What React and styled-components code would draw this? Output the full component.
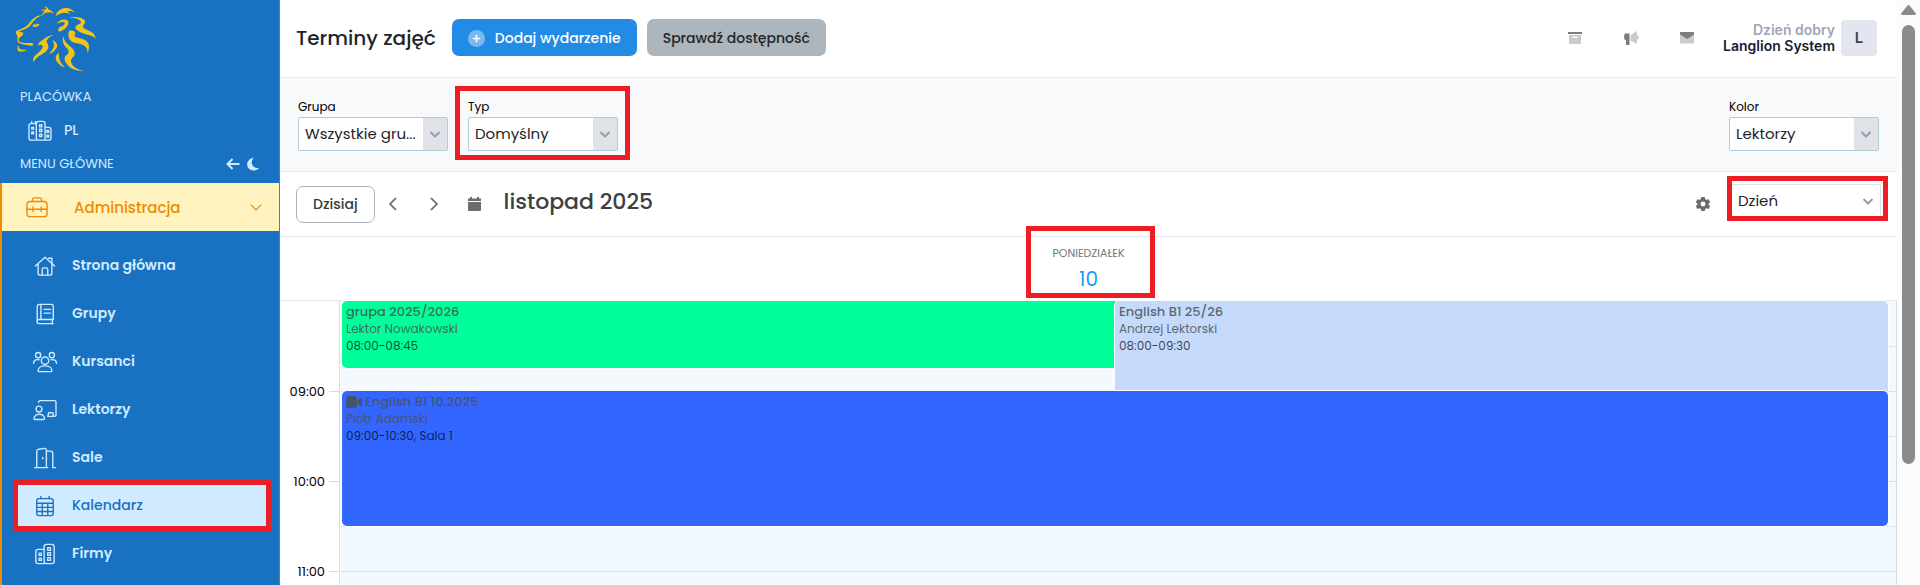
import { useState } from 'react';
import styled, { createGlobalStyle, css } from 'styled-components';

const GlobalStyle = createGlobalStyle`
  * {
    box-sizing: border-box;
  }

  body {
    margin: 0;
    overflow: hidden;
    background: #fff;
    color: #212529;
    font-family: Poppins, Inter, sans-serif;
    font-size: 14px;
  }

  button, select {
    font-family: inherit;
  }
`;

const marked = css`
  position: relative;

  &::after {
    content: '';
    position: absolute;
    inset: ${(props) => props.$inset};
    border: 5px solid #ee1c25;
    pointer-events: none;
  }
`;

const Page = styled.div`
  display: grid;
  grid-template-columns: 280px minmax(0, 1fr) 23px;
  height: 100vh;
  overflow: hidden;
`;

/* ---------- sidebar ---------- */

const Sidebar = styled.aside`
  display: flex;
  flex-direction: column;
  height: 100vh;
  overflow: hidden;
  background: #1971c2;
  border-right: 1px solid #228be6;
  color: #d0ebff;
`;

const Logo = styled.a`
  display: block;
  height: 84px;
  padding: 6px 16px;

  svg {
    display: block;
  }
`;

const Caption = styled.div`
  display: flex;
  align-items: center;
  justify-content: space-between;
  height: 26px;
  flex-shrink: 0;
  padding: 0 18px 0 20px;
  font-size: 13px;
`;

const CaptionTools = styled.div`
  display: flex;
  gap: 4px;
`;

const IconButton = styled.button`
  display: flex;
  align-items: center;
  justify-content: center;
  width: 16px;
  height: 16px;
  padding: 0;
  border: 0;
  background: none;
  color: inherit;
  cursor: pointer;
`;

const Branch = styled.a`
  display: flex;
  align-items: center;
  gap: 11px;
  height: 41px;
  flex-shrink: 0;
  padding-left: 27px;
  color: inherit;
  font-weight: 500;
  text-decoration: none;
`;

const Menu = styled.nav`
  flex-grow: 1;
  margin-top: 6px;
  border-left: 2px solid #f08c00;
`;

const MenuHead = styled.a`
  display: flex;
  align-items: center;
  gap: 25px;
  height: 48px;
  padding: 0 16px 0 23px;
  background: #fff3bf;
  color: #f08c00;
  font-size: 15px;
  font-weight: 500;
  text-decoration: none;

  span {
    flex-grow: 1;
  }
`;

const MenuList = styled.ul`
  display: flex;
  flex-direction: column;
  gap: 7px;
  margin: 0;
  padding: 14px 13px 0 16px;
  list-style: none;
`;

const MenuItem = styled.a`
  display: flex;
  align-items: center;
  gap: 14px;
  height: 41px;
  padding-left: 14px;
  color: ${(props) => (props.$active ? '#1971c2' : '#d0ebff')};
  background: ${(props) => (props.$active ? '#d0ebff' : 'transparent')};
  outline: ${(props) => (props.$active ? '5px solid #ee1c25' : 'none')};
  font-weight: ${(props) => (props.$active ? 500 : 600)};
  text-decoration: none;
`;

/* ---------- top ---------- */

const Main = styled.main`
  display: flex;
  flex-direction: column;
  min-width: 0;
  height: 100vh;
  overflow: hidden;
`;

const Header = styled.header`
  display: flex;
  align-items: center;
  height: 78px;
  flex-shrink: 0;
  padding: 0 20px 2px 16px;
  border-bottom: 1px solid #e4e8ed;
`;

const PageTitle = styled.h1`
  margin: 0 16px 0 0;
  font-size: 20px;
  font-weight: 500;
`;

const Button = styled.button`
  display: flex;
  align-items: center;
  justify-content: center;
  gap: 10px;
  height: 37px;
  margin-right: 10px;
  padding: 1px 16px 0;
  border: ${(props) => (props.$outline ? '1px solid #adb5bd' : '0')};
  border-radius: 7px;
  background: ${(props) => props.$bg || '#fff'};
  color: ${(props) => props.$color || '#343a40'};
  font-size: 14px;
  font-weight: 500;
  cursor: pointer;
`;

const HeaderTools = styled.div`
  display: flex;
  gap: 40px;
  margin-left: auto;
  margin-right: 28px;
`;

const User = styled.div`
  display: flex;
  align-items: center;
  gap: 6px;
  text-align: right;
  font-family: Inter, sans-serif;
  font-size: 14px;
  font-weight: 600;
  line-height: 16px;
  color: #181c32;

  span {
    display: block;
    color: #a1a5b7;
  }
`;

const Avatar = styled.div`
  display: flex;
  align-items: center;
  justify-content: center;
  width: 36px;
  height: 36px;
  border-radius: 4px;
  background: #e4e6ef;
  color: #3f4254;
  font-size: 15px;
`;

/* ---------- filters ---------- */

const Filters = styled.section`
  display: flex;
  gap: 20px;
  height: 94px;
  flex-shrink: 0;
  padding: 20px 18px 0;
  background: #f8f9fb;
  border-bottom: 1px solid #e4e8ed;
`;

const Field = styled.div`
  width: 150px;
  height: 53px;
  margin-left: ${(props) => (props.$end ? 'auto' : '0')};
  ${(props) => props.$inset && marked}

  label {
    display: block;
    height: 19px;
    font-size: 12px;
    line-height: 18px;
    color: #000;
  }
`;

const SelectBox = styled.div`
  display: grid;
  height: 34px;
  border: 1px solid ${(props) => (props.$plain ? '#dee2e6' : '#b1cbdb')};
  border-radius: 2px;
  background: #fff;

  & > * {
    grid-area: 1 / 1;
  }

  select {
    appearance: none;
    width: 100%;
    min-width: 0;
    padding: 0 24px 1px 6px;
    border: 0;
    background: none;
    color: #212529;
    font-size: 15px;
    outline: none;
  }
`;

const SelectArrow = styled.span`
  display: flex;
  align-items: center;
  justify-content: center;
  justify-self: end;
  width: 24px;
  background: ${(props) => (props.$plain ? 'none' : '#dfe3e8')};
  color: #8fa0af;
  pointer-events: none;
`;

/* ---------- calendar ---------- */

const Toolbar = styled.section`
  display: flex;
  align-items: center;
  height: 65px;
  flex-shrink: 0;
  padding: 0 16px;
  border-bottom: 1px solid #e4e8ed;
  color: #6c6c6c;
`;

const Nav = styled.div`
  display: flex;
  gap: 25px;
`;

const Month = styled.h2`
  margin: 0 auto 6px 21px;
  color: #3c4043;
  font-size: 22px;
  font-weight: 500;
`;

const ViewPicker = styled.div`
  width: 150px;
  margin: 0 0 6px 20px;
  ${marked}
`;

const DayHead = styled.div`
  display: flex;
  justify-content: center;
  height: 64px;
  flex-shrink: 0;
  border-bottom: 1px solid #e4e8ed;
`;

const Day = styled.div`
  display: flex;
  flex-direction: column;
  align-items: center;
  width: 129px;
  height: 61px;
  padding-top: 8px;
  color: #70757a;
  font-size: 11px;
  line-height: 16px;
  ${marked}

  strong {
    margin-top: 4px;
    color: #1a9bf5;
    font-size: 20px;
    font-weight: 400;
    line-height: 28px;
  }
`;

const Schedule = styled.div`
  display: grid;
  grid-template-columns: 59px minmax(0, 1fr);
  flex: 1 0 auto;
`;

const Hours = styled.div`
  padding-top: 80px;
`;

const Hour = styled.div`
  display: flex;
  align-items: center;
  justify-content: flex-end;
  gap: 4px;
  height: 21px;
  margin-bottom: 69px;
  color: #000;
  font-size: 13px;

  &::after {
    content: '';
    width: 10px;
    border-top: 1px solid #dadce0;
  }
`;

const Column = styled.div`
  display: grid;
  align-items: start;
  border: solid #dadce0;
  border-width: 0 1px;
  padding-left: 1px;
`;

const Slots = styled.div`
  grid-area: 1 / 1;
  background: #f2f9ff;
`;

const Slot = styled.div`
  height: 90px;
  border-top: 1px solid ${(props) => (props.$first ? 'transparent' : '#dadce0')};

  &::before {
    content: '';
    display: block;
    height: 44px;
    border-bottom: 1px dotted #cfd3d8;
  }
`;

const Events = styled.div`
  grid-area: 1 / 1;
  display: grid;
  grid-template-columns: 1fr 1fr;
  grid-auto-rows: 90px;
  margin: 0 8px 0 1px;
`;

/* an event that shares its hour runs a little under its right neighbour */
const Event = styled.article`
  grid-row: ${(props) => props.$row};
  grid-column: ${(props) => props.$column};
  height: ${(props) => Math.floor(props.$minutes * 1.5)}px;
  margin-right: ${(props) => (props.$under ? '-5px' : '0')};
  padding: 2px 4px;
  border-radius: 5px;
  background: ${(props) => props.$color};
  box-shadow: 0 0 0 1px #fff;
  color: rgba(73, 80, 87, 0.85);
  font-size: 12px;
  line-height: 17px;
`;

const EventTitle = styled.div`
  display: flex;
  align-items: center;
  gap: 3px;
  font-size: 13px;
  font-weight: 500;
`;

const EventTime = styled.div`
  color: rgba(0, 0, 0, 0.7);
`;

/* ---------- page scroll ---------- */

const Scroll = styled.div`
  display: flex;
  flex-direction: column;
  align-items: center;
  background: #fcfcfc;

  svg {
    flex-shrink: 0;
    margin-top: 4px;
  }
`;

const Thumb = styled.div`
  width: 13px;
  height: 75%;
  margin-top: 9px;
  border-radius: 7px;
  background: #8b8b8b;
`;

const menu = [
  { label: 'Strona główna', icon: 'home' },
  { label: 'Grupy', icon: 'book' },
  { label: 'Kursanci', icon: 'people' },
  { label: 'Lektorzy', icon: 'teacher' },
  { label: 'Sale', icon: 'door' },
  { label: 'Kalendarz', icon: 'calendar' },
  { label: 'Firmy', icon: 'company' },
];

const events = [
  { title: 'grupa 2025/2026', who: 'Lektor Nowakowski', time: '08:00-08:45', color: '#00ff99', row: 1, column: '1', minutes: 45, under: true },
  { title: 'English B1 25/26', who: 'Andrzej Lektorski', time: '08:00-09:30', color: '#c5d9fb', row: 1, column: '2', minutes: 90 },
  { title: 'English B1 10.2025', who: 'Piotr Adamski', time: '09:00-10:30, Sala 1', color: '#3366ff', row: 2, column: '1 / 3', minutes: 90, video: true },
];

const shapes = {
  home: (
    <>
      <path d="M1.5 12 12 2.5 22.5 12M4.5 9.5V20a2 2 0 0 0 2 2h11a2 2 0 0 0 2-2V9.5" />
      <path d="M16 3.5h3.5v5M9 22v-6.5a1.5 1.5 0 0 1 1.5-1.5h3a1.5 1.5 0 0 1 1.5 1.5V22" />
    </>
  ),
  book: (
    <>
      <path d="M21 18H5.5a2 2 0 0 0 0 4.5H21M3.5 20V4a2.500 2.500 0 0 1 2.500-2.500h13a2 2 0 0 1 2 2V18M20 18v4.500M7.500 2v16" />
      <path d="M11 7h7M11 11h7" />
    </>
  ),
  people: (
    <>
      <circle cx="12" cy="10.5" r="4" />
      <circle cx="4.5" cy="4.5" r="2.8" />
      <circle cx="19.5" cy="4.5" r="2.8" />
      <path d="M4.5 21.5c0-7 15-7 15 0 0 .6-.4 1-1 1h-13c-.6 0-1-.4-1-1zM-.5 13.500c0-3.500 2.500-4.500 6-4M24.500 13.500c0-3.500-2.500-4.500-6-4" />
    </>
  ),
  teacher: (
    <>
      <path d="M5 3.5c0-1 .6-1.7 1.500-1.700h16c1 0 1.500.7 1.500 1.700v14c0 1-.6 1.500-1.500 1.500H15l1-4h4.500l.8 4" />
      <circle cx="5.5" cy="11" r="3.2" />
      <path d="M0 21.5c0-6.500 11.500-6.500 11.500 0 0 .5-.3.800-.8.800H.8c-.5 0-.8-.3-.8-.8z" />
    </>
  ),
  door: (
    <>
      <path d="M.5 22.5h14.500M3 22.500V5c0-1.500 1-2.300 2.200-2.600L11 1.500c1.400-.2 2.500.6 2.500 2v19M14 4.500h4c1.500 0 2.500 1 2.500 2.500v15.500h3" />
      <path d="M9.5 11.5v1.5" />
    </>
  ),
  calendar: (
    <>
      <rect x="3" y="4" width="18" height="18.5" rx="2.5" />
      <path d="M7.5 1.5V4M16.5 1.5V4M3 9h18M3 13.5h18M3 18h18M9 9v13M15 9v13" />
    </>
  ),
  company: (
    <>
      <rect x="11" y="1.5" width="11" height="21" rx="2.5" />
      <path d="M11 22.5H4.5a2.500 2.500 0 0 1-2.500-2.500V9.500A2.500 2.500 0 0 1 4.500 7H11" />
      <path d="M15 5h3v3h-3zM15 10.5h3v3h-3zM15 16h3v3h-3zM5.5 11h2.500v2.500H5.500zM5.500 16.500h2.500V19H5.500z" />
    </>
  ),
  city: (
    <>
      <path d="M7.5 22H2.5A2.500 2.500 0 0 1 0 19.500V6a2 2 0 0 1 2-2h5.500M3 4V1.500M7 4V1.500" />
      <path d="M17.5 22h-7a2.500 2.500 0 0 1-2.500-2.500V4a2.500 2.500 0 0 1 2.500-2.500h4.500a2.500 2.500 0 0 1 2.500 2.500v18h4a2.500 2.500 0 0 0 2.500-2.500V10.500A2.500 2.500 0 0 0 21.500 8h-4" />
      <path d="M11.5 5h2.500v2.500h-2.500zM11.500 10h2.500v2.500h-2.500zM11.500 15.500h2.500V18h-2.500zM3 8h2v2H3zM3 13h2v2H3zM19.500 11.500h2v2h-2zM19.500 16.500h2v2h-2z" />
    </>
  ),
  briefcase: (
    <>
      <rect x="1" y="6" width="22" height="16.5" rx="3.5" />
      <path d="M7 6V4a2 2 0 0 1 2-2h6a2 2 0 0 1 2 2v2M1 14.5h22M7.5 12v5M16.5 12v5" />
    </>
  ),
};

function LineIcon({ name, size = 22, box = 26 }) {
  return (
    <svg width={box} height={size} viewBox={`${12 - (12 * box) / size} 0 ${(24 * box) / size} 24`}
      fill="none" stroke="currentColor" strokeWidth="1.5" strokeLinecap="round" strokeLinejoin="round" aria-hidden="true">
      {shapes[name]}
    </svg>
  );
}

function Chevron({ size = 12, dir = 'down', weight = 2 }) {
  const d = { down: 'M1.5 4 6 8.5 10.5 4', left: 'M8.5 1 3.5 6l5 5', right: 'M3.5 1l5 5-5 5' };
  return (
    <svg width={size} height={size} viewBox="0 0 12 12" fill="none" stroke="currentColor" strokeWidth={weight} aria-hidden="true">
      <path d={d[dir]} />
    </svg>
  );
}

function Lion() {
  return (
    <svg width="80" height="66" viewBox="48 17 240 198" fill="#f0c419" role="img" aria-label="Langlion">
      <path d="M131 18c12 1 14 7 16 11 6-1 10 5 15 12-7-5-12-6-17-4-6-2-10 0-20 10 3-8 6-11 9-15-5-2-9-1-13 0 6-5 11-5 17-4 1-5-2-8-7-10z" />
      <path d="M127 45c-20-1-32 14-42 27-6 8-16 12-36 20-3 4 0 9 3 15 2 6-1 12 1 17 3 7 25 9 42 12 6 1 6-7 1-8-14-1-30 1-38-4-3-4-2-10 2-13 6-3 9-8 10-14l-14-3c18-7 28-10 36-20 9-12 18-24 35-29z" />
      <path d="M54 134c-2 8-2 15 1 19 8 2 17 0 26-4-8-1-15 0-20-2-4-3-5-8-7-13z" />
      <path d="M98 80c4-8 12-10 20-8 1 5-9 9-20 8zM97 77l17-6-6-1c-6 1-9 3-11 7z" />
      <path d="M167 47c3-14 14-22 29-24 11-1 21 4 30 15-10-6-18-7-26-4 6 0 8 3 9 6-14-6-27-3-42 7z" />
      <path d="M170 70c8-11 22-16 32-10 9 8-2 29-25 34-4-5-2-10 2-14 10-1 16-8 15-14-7-3-15 0-24 4z" />
      <path d="M207 51c20-3 40 0 47 9 5 8-3 12-5 17-1 8 9 10 18 14 13 6 18 10 20 24-11-12-26-10-40-17-14-6-24-12-20-20 4-6 16-6 16-13-2-7-19-13-36-14z" />
      <path d="M207 91c6-1 16-1 19 5 1 7-5 9-1 13 11 5 25 4 35 14 10 9 8 24 3 36-1-14-3-21-16-26-12-5-29-4-37-14-6-9-6-20-3-28z" />
      <path d="M162 104c-16 1-26 8-36 16-11 8-12 13-11 16 8-4 12-3 13 3-1 10-14 18-22 26-6 6-8 13-6 21 9-15 19-20 32-28 12-8 17-17 10-29-3-4-3-8 1-12 5-7 10-10 19-13z" />
      <path d="M157 120c16 6 18 18 10 27-5 7-12 12-20 14 8-9 14-16 15-24 1-7-2-12-5-17z" />
      <path d="M190 107c-5 16 1 28 11 37 6 6 6 13 2 18-9 6-13 12-5 26 12 18 30 24 53 24-18-5-33-12-37-25-3-10 3-15 8-19 6-12-1-21-10-29-12-10-20-17-22-32z" />
      <path d="M176 157c-10 7-11 17-5 27 6 9 15 15 24 17-7-7-13-13-16-22-2-8-3-15-3-22z" />
    </svg>
  );
}

function Select({ id, options, plain, ariaLabel }) {
  const [value, setValue] = useState(options[0]);

  return (
    <SelectBox $plain={plain}>
      <select id={id} aria-label={ariaLabel} value={value} onChange={(e) => setValue(e.target.value)}>
        {options.map((o) => <option key={o}>{o}</option>)}
      </select>
      <SelectArrow $plain={plain}><Chevron /></SelectArrow>
    </SelectBox>
  );
}

function SideMenu() {
  return (
    <Sidebar>
      <Logo href="#"><Lion /></Logo>
      <Caption>PLACÓWKA</Caption>
      <Branch href="#"><LineIcon name="city" />PL</Branch>
      <Caption>
        MENU GŁÓWNE
        <CaptionTools>
          <IconButton aria-label="Zwiń menu">
            <svg width="14" height="12" viewBox="0 0 14 12" fill="none" stroke="currentColor" strokeWidth="2">
              <path d="M6.5 1 1.5 6l5 5M1.5 6H13.5" />
            </svg>
          </IconButton>
          <IconButton aria-label="Tryb ciemny">
            <svg width="13" height="14" viewBox="0 0 13 14" fill="currentColor">
              <path d="M7 .5C-2 2-2 13 6.500 13.500 9 13.500 11 12.500 12 11 5 12 2.500 5 7 .5z" />
            </svg>
          </IconButton>
        </CaptionTools>
      </Caption>
      <Menu>
        <MenuHead href="#">
          <LineIcon name="briefcase" box={24} />
          <span>Administracja</span>
          <Chevron size={14} weight={1} />
        </MenuHead>
        <MenuList>
          {menu.map((item) => (
            <li key={item.label}>
              <MenuItem href="#" $active={item.icon === 'calendar'}>
                <LineIcon name={item.icon} />
                {item.label}
              </MenuItem>
            </li>
          ))}
        </MenuList>
      </Menu>
    </Sidebar>
  );
}

function TopBar() {
  return (
    <Header>
      <PageTitle>Terminy zajęć</PageTitle>
      <Button $bg="#228be6" $color="#fff">
        <svg width="17" height="17" viewBox="0 0 16 16" aria-hidden="true">
          <circle cx="8" cy="8" r="8" fill="#7ab9f0" />
          <path d="M8 4.5v7M4.5 8h7" stroke="#fff" strokeWidth="1.5" />
        </svg>
        Dodaj wydarzenie
      </Button>
      <Button $bg="#adb5bd" $color="#212529">Sprawdź dostępność</Button>
      <HeaderTools>
        <IconButton aria-label="Archiwum">
          <svg width="14" height="14" viewBox="0 0 14 14">
            <path fill="#7d7d7d" d="M0 1h14v2H0z" />
            <path fill="#cbcbcb" fillRule="evenodd" d="M1 4h12v8a1 1 0 0 1-1 1H2a1 1 0 0 1-1-1zM4.5 5.5V7h5V5.5z" />
          </svg>
        </IconButton>
        <IconButton aria-label="Ogłoszenia">
          <svg width="15" height="14" viewBox="0 0 15 14">
            <path fill="#cbcbcb" d="M6.5 4 13 0v4.5a2 2 0 0 1 0 4V13L6.5 9.5z" />
            <path fill="#7d7d7d" d="M1 2.5h4.500V14H2V9H1C-.2 7.500-.2 4 1 2.500z" />
          </svg>
        </IconButton>
        <IconButton aria-label="Wiadomości">
          <svg width="14" height="12" viewBox="0 0 14 12">
            <path fill="#cbcbcb" d="M0 2h14v8.5a1 1 0 0 1-1 1H1a1 1 0 0 1-1-1z" />
            <path fill="#7d7d7d" d="M1 0h12c.6 0 1 .4 1 1v1.500L7 7 0 2.500V1c0-.6.400-1 1-1z" />
          </svg>
        </IconButton>
      </HeaderTools>
      <User>
        <div>
          <span>Dzień dobry</span>
          Langlion System
        </div>
        <Avatar>L</Avatar>
      </User>
    </Header>
  );
}

function CalendarView() {
  return (
    <>
      <Toolbar>
        <Button $outline>Dzisiaj</Button>
        <Nav>
          <IconButton aria-label="Poprzedni"><Chevron size={14} dir="left" weight={1.5} /></IconButton>
          <IconButton aria-label="Następny"><Chevron size={14} dir="right" weight={1.5} /></IconButton>
          <IconButton aria-label="Wybierz datę">
            <svg width="13" height="14" viewBox="0 0 13 14" fill="currentColor">
              <path d="M2 0h2v1.5h5V0h2v1.5h2V4H0V1.5h2zM0 5h13v8a1 1 0 0 1-1 1H1a1 1 0 0 1-1-1z" />
            </svg>
          </IconButton>
        </Nav>
        <Month>listopad 2025</Month>
        <IconButton aria-label="Ustawienia">
          <svg width="14" height="14" viewBox="2 2 20 20" fill="currentColor">
            <path fillRule="evenodd" d="M9.5 2h5l.6 3.1 1.800 1 3-1L22.300 9.400 20 11.500v1.500l2.300 2-2.400 4.200-3-1-1.800 1-.6 2.800h-5l-.6-2.800-1.800-1-3 1L1.700 15 4 13v-1.500L1.700 9.400l2.400-4.300 3 1 1.800-1zM12 8.500a3.500 3.500 0 1 0 0 7 3.500 3.500 0 0 0 0-7z" />
          </svg>
        </IconButton>
        <ViewPicker $inset="-8px -7px -3px -4px">
          <Select options={['Dzień', 'Tydzień', 'Miesiąc']} plain ariaLabel="Widok" />
        </ViewPicker>
      </Toolbar>
      <DayHead>
        <Day $inset="-11px -2px 0 2px">
          PONIEDZIAŁEK
          <strong>10</strong>
        </Day>
      </DayHead>
      <Schedule>
        <Hours>
          {['09:00', '10:00', '11:00'].map((h) => <Hour key={h}>{h}</Hour>)}
        </Hours>
        <Column>
          <Slots>
            {[8, 9, 10, 11].map((h) => <Slot key={h} $first={h === 8} />)}
          </Slots>
          <Events>
            {events.map((ev) => (
              <Event key={ev.title} $row={ev.row} $column={ev.column} $color={ev.color} $minutes={ev.minutes} $under={ev.under}>
                <EventTitle>
                  {ev.video && (
                    <svg width="16" height="12" viewBox="0 0 16 12" fill="currentColor" aria-hidden="true">
                      <rect width="11" height="12" rx="2.5" />
                      <path d="M11.5 6q1-3.500 4.500-5v10q-3.500-1.500-4.500-5z" />
                    </svg>
                  )}
                  {ev.title}
                </EventTitle>
                <div>{ev.who}</div>
                <EventTime>{ev.time}</EventTime>
              </Event>
            ))}
          </Events>
        </Column>
      </Schedule>
    </>
  );
}

function App() {
  return (
    <>
      <GlobalStyle />
      <Page>
        <SideMenu />
        <Main>
          <TopBar />
          <Filters>
            <Field>
              <label htmlFor="grupa">Grupa</label>
              <Select id="grupa" options={['Wszystkie gru...']} />
            </Field>
            <Field $inset="-12px -12px -9px -13px">
              <label htmlFor="typ">Typ</label>
              <Select id="typ" options={['Domyślny']} />
            </Field>
            <Field $end>
              <label htmlFor="kolor">Kolor</label>
              <Select id="kolor" options={['Lektorzy', 'Grupy']} />
            </Field>
          </Filters>
          <CalendarView />
        </Main>
        <Scroll>
          <svg width="15" height="12" viewBox="0 0 15 12" fill="#8b8b8b" aria-hidden="true">
            <path d="M6.5 1.5q1-1.200 2 0l6 7.500c.8 1.200.3 2-1 2h-12c-1.300 0-1.800-.8-1-2z" />
          </svg>
          <Thumb />
        </Scroll>
      </Page>
    </>
  );
}

export default App;
